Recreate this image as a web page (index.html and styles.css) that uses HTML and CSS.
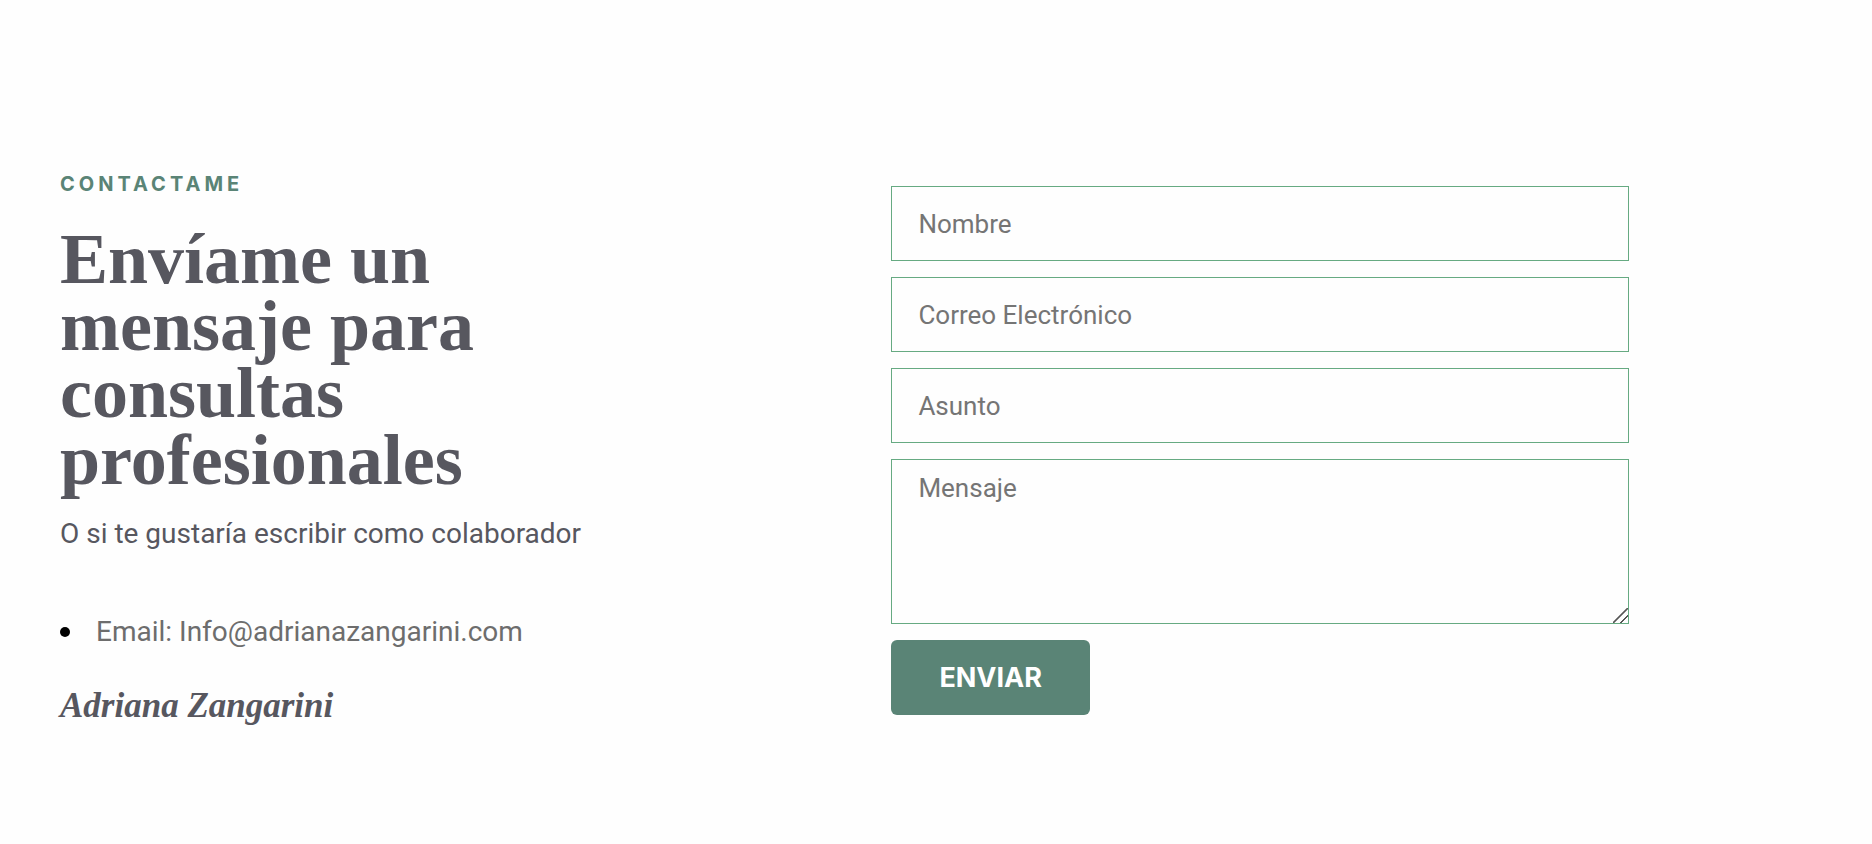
FILE: index.html
```
<!DOCTYPE html>
<html lang="es">
  <head>
    <meta charset="UTF-8" />
    <meta name="viewport" content="width=device-width, initial-scale=1.0" />
    <title>Contacto</title>
    <link rel="stylesheet" href="styles.css">
  </head>
  <body>
    <section class="contact">
      <div class="info">
        <p class="subtitle">CONTACTAME</p>
        <h2 class="title">Envíame un mensaje para consultas profesionales</h2>
        <p class="text">O si te gustaría escribir como colaborador</p>
        <ul class="list">
          <li class="item">Email: Info@adrianazangarini.com</li>
        </ul>
        <p class="signature">Adriana Zangarini</p>
      </div>

      <form class="form">
        <input type="text" class="field" placeholder="Nombre" aria-label="Nombre" />
        <input type="email" class="field" placeholder="Correo Electrónico" aria-label="Correo Electrónico" />
        <input type="text" class="field" placeholder="Asunto" aria-label="Asunto" />
        <textarea class="field message" placeholder="Mensaje" aria-label="Mensaje"></textarea>
        <button type="submit" class="btn">ENVIAR</button>
      </form>
    </section>
  </body>
</html>
```
FILE: styles.css
```
* {
  margin: 0;
  padding: 0;
  box-sizing: border-box;
}

body {
  background: #fefefe;
  color: #57575f;
  font-family: Roboto, "Liberation Sans", sans-serif;
}

.contact {
  display: grid;
  grid-template-columns: 53fr 47fr;
  align-items: start;
  padding: 172px 13% 120px 60px;
}

.subtitle {
  color: #5a8476;
  font-family: Inter, sans-serif;
  font-size: 20px;
  font-weight: 700;
  line-height: 24px;
  letter-spacing: 4px;
}

.title {
  max-width: 540px;
  margin-top: 30px;
  font-family: "Liberation Serif", serif;
  font-size: 72px;
  font-weight: 700;
  line-height: 67px;
}

.text {
  margin-top: 24px;
  font-size: 28px;
  line-height: 32px;
}

.list {
  margin-top: 66px;
  color: #6d6d6d;
  font-size: 28px;
  line-height: 32px;
  list-style: none;
}

.item {
  display: flex;
  align-items: center;
  gap: 26px;
}

.item::before {
  content: "";
  width: 10px;
  height: 10px;
  border-radius: 50%;
  background: #000;
}

.signature {
  margin-top: 38px;
  font-family: "Liberation Serif", serif;
  font-size: 35px;
  font-style: italic;
  font-weight: 700;
  line-height: 40px;
}

.form {
  display: flex;
  flex-direction: column;
  align-items: flex-start;
  gap: 16px;
  padding-top: 14px;
}

.field {
  width: 100%;
  height: 75px;
  padding: 12px 26px;
  border: 1px solid #66aa82;
  background: transparent;
  font-family: inherit;
  font-size: 26px;
  line-height: 32px;
}

.field::placeholder {
  color: #757575;
}

.message {
  height: 165px;
  resize: vertical;
}

.message::-webkit-resizer {
  background: linear-gradient(135deg, transparent 46%, #555 47%, #555 53%, transparent 54%, transparent 72%, #555 73%, #555 79%, transparent 80%);
}

.btn {
  padding: 20px 48px;
  border: none;
  border-radius: 6px;
  background: #5a8476;
  color: #fff;
  font-family: Inter, sans-serif;
  font-size: 27px;
  font-weight: 700;
  line-height: 35px;
}
```
